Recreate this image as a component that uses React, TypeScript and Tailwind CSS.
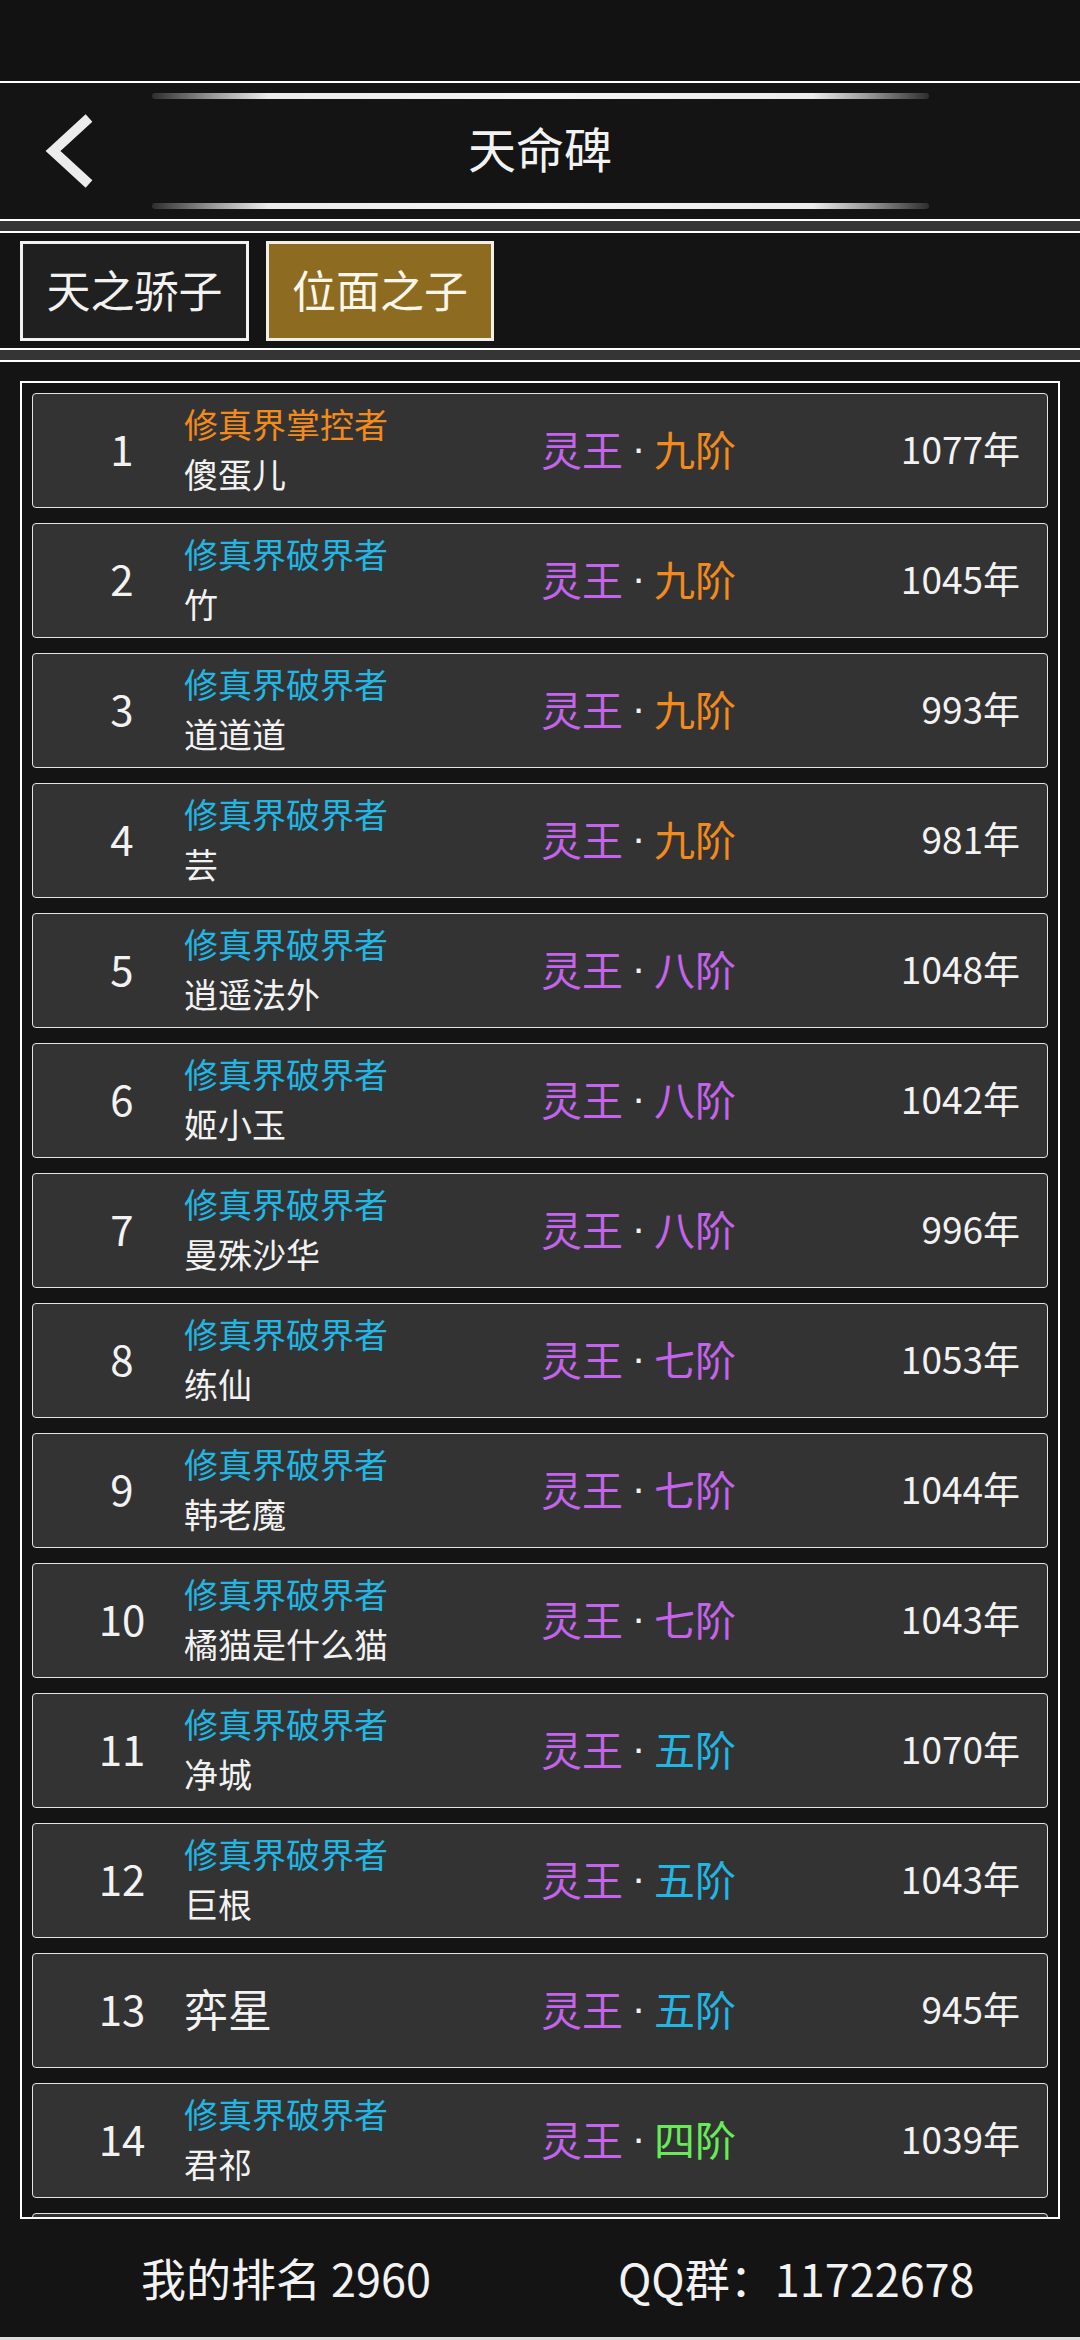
import React from "react";

type Row = {
  rank: number;
  title?: string;
  titleColor?: string;
  name: string;
  stage: string;
  stageColor: string;
  years: string;
  blank?: boolean;
};

const ORANGE = "text-[#f28a1c]";
const CYAN = "text-[#21b6e4]";
const PURPLE = "text-[#c463ec]";
const GREEN = "text-[#66ec58]";

const rows: Row[] = [
  { rank: 1, title: "修真界掌控者", titleColor: ORANGE, name: "傻蛋儿", stage: "九阶", stageColor: ORANGE, years: "1077年" },
  { rank: 2, title: "修真界破界者", titleColor: CYAN, name: "竹", stage: "九阶", stageColor: ORANGE, years: "1045年" },
  { rank: 3, title: "修真界破界者", titleColor: CYAN, name: "道道道", stage: "九阶", stageColor: ORANGE, years: "993年" },
  { rank: 4, title: "修真界破界者", titleColor: CYAN, name: "芸", stage: "九阶", stageColor: ORANGE, years: "981年" },
  { rank: 5, title: "修真界破界者", titleColor: CYAN, name: "逍遥法外", stage: "八阶", stageColor: PURPLE, years: "1048年" },
  { rank: 6, title: "修真界破界者", titleColor: CYAN, name: "姬小玉", stage: "八阶", stageColor: PURPLE, years: "1042年" },
  { rank: 7, title: "修真界破界者", titleColor: CYAN, name: "曼殊沙华", stage: "八阶", stageColor: PURPLE, years: "996年" },
  { rank: 8, title: "修真界破界者", titleColor: CYAN, name: "练仙", stage: "七阶", stageColor: PURPLE, years: "1053年" },
  { rank: 9, title: "修真界破界者", titleColor: CYAN, name: "韩老魔", stage: "七阶", stageColor: PURPLE, years: "1044年" },
  { rank: 10, title: "修真界破界者", titleColor: CYAN, name: "橘猫是什么猫", stage: "七阶", stageColor: PURPLE, years: "1043年" },
  { rank: 11, title: "修真界破界者", titleColor: CYAN, name: "净城", stage: "五阶", stageColor: CYAN, years: "1070年" },
  { rank: 12, title: "修真界破界者", titleColor: CYAN, name: "巨根", stage: "五阶", stageColor: CYAN, years: "1043年" },
  { rank: 13, name: "弈星", stage: "五阶", stageColor: CYAN, years: "945年" },
  { rank: 14, title: "修真界破界者", titleColor: CYAN, name: "君祁", stage: "四阶", stageColor: GREEN, years: "1039年" },
  { rank: 15, name: "", stage: "", stageColor: GREEN, years: "", blank: true },
];

function DecoLine() {
  return (
    <div className="mx-auto h-[6px] w-[777px] rounded-full bg-[linear-gradient(90deg,#2e2e2e_0%,#9a9a9a_8%,#ececec_15%,#f4f4f4_50%,#ececec_85%,#9a9a9a_92%,#2e2e2e_100%)]" />
  );
}

function RankRow({ r }: { r: Row }) {
  if (r.blank) {
    return <div className="h-[115px] shrink-0 rounded-[4px] border border-[#e4e4e4] bg-[#333333]" />;
  }
  return (
    <div className="flex h-[115px] shrink-0 items-center rounded-[4px] border border-[#e4e4e4] bg-[#333333] pb-[4px] pl-[29px] pr-[27px] text-[#f2f2f2]">
      <div className="w-[120px] text-center text-[42px] leading-[1.2]">{r.rank}</div>
      <div className="ml-[2px] w-[357px]">
        {r.title ? (
          <div className="flex flex-col">
            <div className={`text-[34px] leading-[50px] ${r.titleColor}`}>{r.title}</div>
            <div className="text-[34px] leading-[50px]">{r.name}</div>
          </div>
        ) : (
          <div className="text-[44px] leading-[1.2]">{r.name}</div>
        )}
      </div>
      <div className="flex items-center text-[41px] leading-[1.2]">
        <span className={PURPLE}>灵王</span>
        <span className="inline-block w-[31px] text-center font-['Liberation_Sans',sans-serif] text-[#f2f2f2]">·</span>
        <span className={r.stageColor}>{r.stage}</span>
      </div>
      <div className="flex-1 text-right text-[37px] leading-[1.2]">{r.years}</div>
    </div>
  );
}

export default function App() {
  return (
    <div className="flex h-[2340px] w-[1080px] flex-col overflow-hidden bg-[#353535] font-['Noto_Sans_CJK_SC','Noto_Sans',sans-serif] text-[#f2f2f2]">
      {/* status area */}
      <div className="h-[81px] shrink-0 bg-[#121212]" />

      {/* header */}
      <div className="flex h-[140px] shrink-0 flex-col border-y-2 border-white bg-[#141414] pb-[10px] pt-[10px]">
        <DecoLine />
        <div className="grid flex-1 grid-cols-[1fr_auto_1fr] items-center">
          <div className="pl-[40px]">
            <svg width="56" height="76" viewBox="0 0 56 76" fill="none">
              <polyline points="49,5 13,38 49,71" stroke="#ececec" strokeWidth="10" strokeLinecap="butt" strokeLinejoin="miter" />
            </svg>
          </div>
          <div className="pb-[6px] text-[48px] leading-[1.2]">天命碑</div>
          <div />
        </div>
        <DecoLine />
      </div>

      <div className="h-[10px] shrink-0" />

      {/* tabs */}
      <div className="flex h-[119px] shrink-0 items-start gap-[17px] border-y-2 border-white bg-[#141414] pl-[20px] pt-[8px]">
        <div className="flex h-[100px] w-[229px] items-center justify-center border-[3px] border-[#f2f2f2] bg-[#202020] pb-[4px] text-[44px] leading-[1.2]">
          天之骄子
        </div>
        <div className="flex h-[100px] w-[228px] items-center justify-center border-[3px] border-[#f2efe6] bg-[#8d6c22] pb-[4px] text-[44px] leading-[1.2] text-[#fbf6ea]">
          位面之子
        </div>
      </div>

      <div className="h-[10px] shrink-0" />

      {/* list + footer */}
      <div className="flex flex-1 flex-col border-t-2 border-white bg-[#141414] border-b-[3px] border-b-[#dcdcdc]">
        <div className="px-[20px] pt-[19px]">
          <div className="h-[1838px] overflow-hidden border-2 border-white px-[10px] pt-[10px]">
            <div className="flex flex-col gap-[15px]">
              {rows.map((r) => (
                <RankRow key={r.rank} r={r} />
              ))}
            </div>
          </div>
        </div>
        <div className="flex flex-1 items-center pl-[141px] text-[45px] leading-[1.2]">
          <span>我的排名 2960</span>
          <span className="ml-[187px]">QQ群：11722678</span>
        </div>
      </div>
    </div>
  );
}
